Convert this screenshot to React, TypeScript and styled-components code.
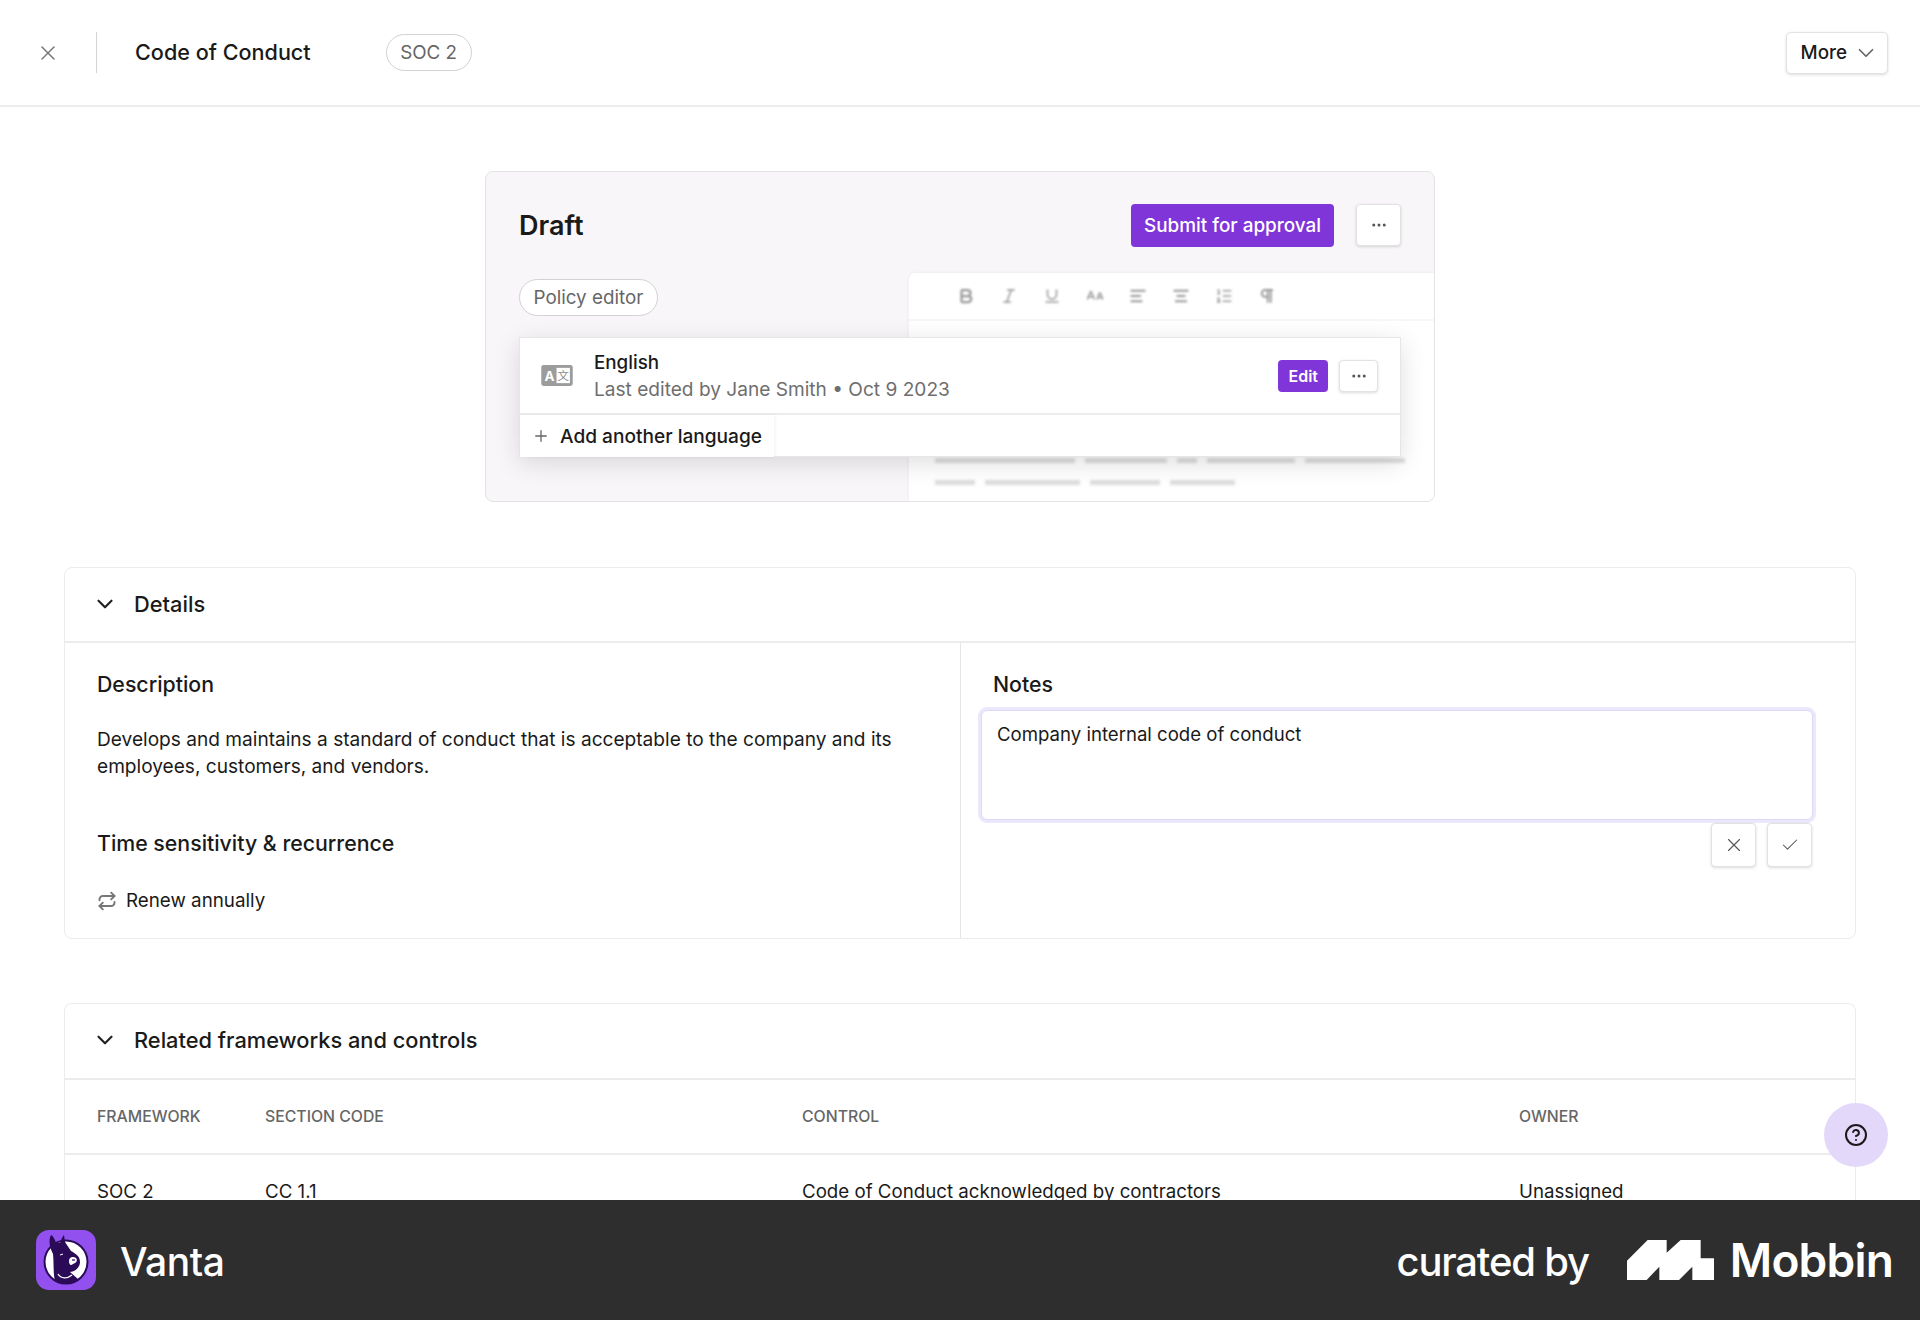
import React from "react";
import styled, { createGlobalStyle } from "styled-components";
import {
  X,
  Check,
  ChevronDown,
  Plus,
  Ellipsis,
  Repeat,
  CircleHelp,
  Bold,
  Italic,
  Underline,
  ALargeSmall,
  AlignLeft,
  AlignCenter,
  ListOrdered,
  Pilcrow,
} from "lucide-react";

const GlobalStyle = createGlobalStyle`
  html, body { margin: 0; padding: 0; background: #fff; }
  body { font-family: Inter, "Liberation Sans", sans-serif; color: #1a1a1a; -webkit-font-smoothing: antialiased; }
  * { box-sizing: border-box; }
`;

const Page = styled.div`
  position: relative;
  width: 1920px;
  height: 1320px;
  display: flex;
  flex-direction: column;
  overflow: hidden;
`;

const TopBar = styled.header`
  flex: none;
  height: 107px;
  display: flex;
  align-items: center;
  padding: 0 32px 0 36px;
  border-bottom: 2px solid #ececec;
`;

const IconOnly = styled.span`
  display: flex;
  color: #777;
`;

const Divider = styled.span`
  width: 1px;
  height: 41px;
  margin: 0 38px 0 36px;
  background: #d4d4d4;
`;

const Title = styled.h1`
  margin: 0 75px 1px 0;
  font-size: 21.6px;
  font-weight: 500;
  line-height: 28px;
`;

const Pill = styled.span`
  display: inline-flex;
  align-items: center;
  height: 37px;
  padding: 0 13.5px;
  border: 1.5px solid #d2d2d2;
  border-radius: 19px;
  background: #fff;
  color: #666;
  font-size: 18.8px;
  white-space: nowrap;
`;

const Spacer = styled.div`
  flex: 1;
`;

const MoreButton = styled.button`
  display: flex;
  align-items: center;
  gap: 6px;
  height: 42px;
  padding: 0 8px 0 14px;
  border: 1px solid #e2e2e2;
  border-radius: 5px;
  background: #fff;
  box-shadow: 0 1px 3px rgba(0, 0, 0, 0.14);
  color: #1a1a1a;
  font: 500 18.8px Inter, sans-serif;
  svg { color: #666; }
`;

const Content = styled.main`
  flex: 1;
  min-height: 0;
  overflow: hidden;
  padding: 64px 64px 0;
  display: flex;
  flex-direction: column;
  gap: 65px;
`;

const DraftCard = styled.section`
  position: relative;
  align-self: center;
  flex: none;
  width: 950px;
  height: 331px;
  padding: 32px 33px 0;
  border: 1px solid #e4e3e4;
  border-radius: 8px;
  background: #f8f6f8;
  overflow: hidden;
`;

const DraftHead = styled.div`
  display: flex;
  align-items: center;
  height: 42px;
`;

const DraftTitle = styled.h2`
  flex: 1;
  margin: 0;
  font-size: 27px;
  font-weight: 600;
`;

const PrimaryButton = styled.button<{ $small?: boolean }>`
  height: ${(p) => (p.$small ? "32px" : "43px")};
  padding: 0 ${(p) => (p.$small ? "10px" : "13px")};
  border: 0;
  border-radius: 4px;
  background: #8035d9;
  color: #fff;
  font: ${(p) => (p.$small ? "600 16px" : "500 18.9px")} Inter, sans-serif;
  white-space: nowrap;
`;

const SquareButton = styled.button<{ $w: number; $h: number; $ml?: number }>`
  display: flex;
  align-items: center;
  justify-content: center;
  flex: none;
  width: ${(p) => p.$w}px;
  height: ${(p) => p.$h}px;
  margin-left: ${(p) => p.$ml ?? 0}px;
  padding: 0;
  border: 1px solid #e2e2e2;
  border-radius: 4px;
  background: #fff;
  box-shadow: 0 1px 3px rgba(0, 0, 0, 0.14);
  color: #555;
`;

const PolicyRow = styled.div`
  position: relative;
  z-index: 1;
  margin-top: 33px;
  display: flex;
`;

const EditorPreview = styled.div`
  position: absolute;
  left: 423px;
  right: 0;
  top: 101px;
  bottom: 0;
  background: #fff;
  border-top-left-radius: 6px;
  box-shadow: 0 0 4px rgba(0, 0, 0, 0.05);
`;

const EditorTools = styled.div`
  height: 48px;
  display: flex;
  align-items: center;
  gap: 25px;
  padding-left: 48px;
  border-bottom: 2px solid #f7f7f7;
  color: #999;
  svg { filter: blur(1px); }
`;

const EditorLine = styled.div<{ $top: number }>`
  position: absolute;
  left: 26px;
  top: ${(p) => p.$top}px;
  display: flex;
  gap: 10px;
  filter: blur(1.5px);
`;

const EditorWord = styled.span<{ $w: number }>`
  display: block;
  width: ${(p) => p.$w}px;
  height: 5px;
  background: #dcdcdc;
`;

const LanguageCard = styled.div`
  position: relative;
  z-index: 2;
  margin-top: 21px;
  height: 120px;
  border: 1px solid #e6e6e6;
  background: #fff;
  box-shadow: 0 6px 24px rgba(0, 0, 0, 0.13);
`;

const LanguageRow = styled.div`
  display: flex;
  align-items: center;
  height: 77px;
  padding: 0 22px 0 21px;
  border-bottom: 2px solid #ececec;
`;

const LanguageText = styled.div`
  flex: 1;
  margin-left: 21px;
`;

const LanguageName = styled.div`
  font-size: 18.8px;
  font-weight: 500;
  line-height: 27px;
`;

const LanguageMeta = styled.div`
  font-size: 19.1px;
  line-height: 27px;
  color: #6e6e6e;
`;

const AddRow = styled.div`
  display: inline-flex;
  align-items: center;
  gap: 10px;
  height: 42px;
  padding: 0 12px 0 12px;
  background: #fff;
  box-shadow: 1px 0 3px rgba(0, 0, 0, 0.06);
  font-size: 19.1px;
  font-weight: 500;
  svg { color: #666; }
`;

const Panel = styled.section<{ $open?: boolean }>`
  flex: none;
  border: 1px solid #ececec;
  border-radius: 8px;
  ${(p) => (p.$open ? "margin-top: -1px; border-bottom: 0; border-radius: 8px 8px 0 0;" : "")}
`;

const PanelHead = styled.div<{ $tall?: boolean }>`
  display: flex;
  align-items: center;
  gap: 16px;
  height: ${(p) => (p.$tall ? "76px" : "75px")};
  padding: 0 0 ${(p) => (p.$tall ? "3px" : "2px")} 27px;
  border-bottom: 2px solid #ececec;
  font-size: 21.8px;
  font-weight: 500;
  svg { color: #222; }
`;

const Columns = styled.div`
  display: grid;
  grid-template-columns: 896px 1fr;
  height: 295px;
`;

const LeftCol = styled.div`
  padding: 27px 32px 0;
  border-right: 1px solid #e6e6e6;
`;

const RightCol = styled.div`
  padding: 27px 32px 0 32px;
`;

const SubHead = styled.h3<{ $mt?: number }>`
  margin: ${(p) => p.$mt ?? 0}px 0 0;
  font-size: 21.3px;
  font-weight: 500;
  line-height: 28px;
`;

const Body = styled.p`
  margin: 28px 0 0;
  font-size: 19.1px;
  line-height: 27px;
`;

const RenewRow = styled.div`
  display: flex;
  align-items: center;
  gap: 9px;
  margin-top: 30px;
  font-size: 18.8px;
  line-height: 27px;
  svg { color: #777; }
`;

const NotesBox = styled.div`
  margin: 12px 0 0 -12px;
  width: 832px;
  height: 110px;
  padding: 10px 15px;
  border: 1px solid #dcd8f6;
  border-radius: 6px;
  background: #fff;
  box-shadow: 0 0 0 3px #ebe8fc;
  font-size: 18.6px;
  line-height: 27px;
`;

const NotesActions = styled.div`
  display: flex;
  justify-content: flex-end;
  gap: 11px;
  width: 831px;
  margin: 3px 0 0 -12px;
`;

const TableHead = styled.div`
  display: grid;
  grid-template-columns: 168px 537px 717px 1fr;
  align-items: center;
  height: 75px;
  padding-left: 32px;
  border-bottom: 2px solid #ececec;
  color: #666;
  font-size: 15.8px;
  font-weight: 500;
  text-transform: uppercase;
`;

const TableRow = styled.div`
  display: grid;
  grid-template-columns: 168px 537px 717px 1fr;
  align-items: center;
  height: 72px;
  padding-left: 32px;
  font-size: 18.7px;
`;

const HelpButton = styled.button`
  position: absolute;
  left: 1824px;
  top: 1103px;
  display: flex;
  align-items: center;
  justify-content: center;
  width: 64px;
  height: 64px;
  padding: 0;
  border: 0;
  border-radius: 50%;
  background: #e3d8f9;
  color: #1a1a1a;
`;

const Footer = styled.footer`
  position: relative;
  z-index: 3;
  flex: none;
  height: 120px;
  display: flex;
  align-items: center;
  padding: 0 27px 0 36px;
  background: #2e2e2e;
  color: #fff;
`;

const AppName = styled.span`
  margin: 2px 0 0 24px;
  font-size: 39px;
  font-weight: 500;
  letter-spacing: -0.5px;
`;

const Curated = styled.span`
  margin: 2px 38px 0 0;
  font-size: 40px;
  font-weight: 500;
  letter-spacing: -1.2px;
`;

const Brand = styled.span`
  margin-left: 16px;
  font-size: 46px;
  font-weight: 600;
  letter-spacing: -0.8px;
`;

const LanguageIcon = () => (
  <svg width="32" height="21" viewBox="0 0 33 22">
    <rect width="33" height="22" rx="2.5" fill="#9c9c9c" />
    <rect x="16" y="3" width="14" height="16" fill="#fff" />
    <text x="3.5" y="16.5" fontSize="14" fontWeight="700" fill="#fff" fontFamily="Inter, sans-serif">
      A
    </text>
    <text x="17" y="15.5" fontSize="12" fill="#8a8a8a" fontFamily="'Noto Sans CJK SC', sans-serif">
      文
    </text>
  </svg>
);

const VantaLogo = () => (
  <svg width="60" height="60" viewBox="0 0 60 60">
    <rect width="60" height="60" rx="13" fill="#9250ee" />
    <circle cx="30" cy="32" r="21.5" fill="#fff" stroke="#2b0b57" strokeWidth="2" />
    <path
      d="M15 5C12 11 14 18 17 24C18 33 17 43 19 51C25 55 36 55 42 49L34 42C38 42 44 38 44 32C44 26 40 24 35 21C33 18 31 15 29 12L28 5C26 7 25 10 24 13L20 13C19 9 17 6 15 5Z"
      fill="#2b0b57"
    />
    <path d="M22 44C25 49 31 49 36 45" fill="none" stroke="#fff" strokeWidth="1.4" />
    <path d="M33 31C33 27 37 26 40 28C42 31 40 33 37 34C35 36 33 35 33 31Z" fill="#fff" />
    <path d="M36 30L39 30" stroke="#2b0b57" strokeWidth="1.2" />
    <path d="M24 25L27 24" stroke="#fff" strokeWidth="1" />
  </svg>
);

const MobbinMark = () => (
  <svg width="87" height="40" viewBox="36 30 261 120">
    <path
      d="M36 92L98 30H155V68L197 30H257V85H297V150H232V110L192 150H133V110L95 150H36Z"
      fill="#fff"
    />
  </svg>
);

const firstLine = [140, 82, 20, 88, 100];
const secondLine = [40, 95, 70, 65];

export default function App() {
  return (
    <Page>
      <GlobalStyle />
      <TopBar>
        <IconOnly>
          <X size={24} strokeWidth={1.5} />
        </IconOnly>
        <Divider />
        <Title>Code of Conduct</Title>
        <Pill>SOC 2</Pill>
        <Spacer />
        <MoreButton>
          More
          <ChevronDown size={26} strokeWidth={1.6} />
        </MoreButton>
      </TopBar>
      <Content>
        <DraftCard>
          <EditorPreview>
            <EditorTools>
              <Bold size={18} strokeWidth={3} />
              <Italic size={18} />
              <Underline size={18} />
              <ALargeSmall size={18} />
              <AlignLeft size={18} strokeWidth={2.5} />
              <AlignCenter size={18} strokeWidth={2.5} />
              <ListOrdered size={18} />
              <Pilcrow size={18} strokeWidth={2.5} />
            </EditorTools>
            <EditorLine $top={185}>
              {firstLine.map((w, i) => (
                <EditorWord key={i} $w={w} />
              ))}
            </EditorLine>
            <EditorLine $top={207}>
              {secondLine.map((w, i) => (
                <EditorWord key={i} $w={w} />
              ))}
            </EditorLine>
          </EditorPreview>
          <DraftHead>
            <DraftTitle>Draft</DraftTitle>
            <PrimaryButton>Submit for approval</PrimaryButton>
            <SquareButton $w={45} $h={42} $ml={22}>
              <Ellipsis size={18} />
            </SquareButton>
          </DraftHead>
          <PolicyRow>
            <Pill>Policy editor</Pill>
          </PolicyRow>
          <LanguageCard>
            <LanguageRow>
              <LanguageIcon />
              <LanguageText>
                <LanguageName>English</LanguageName>
                <LanguageMeta>Last edited by Jane Smith • Oct 9 2023</LanguageMeta>
              </LanguageText>
              <PrimaryButton $small>Edit</PrimaryButton>
              <SquareButton $w={39} $h={32} $ml={11}>
                <Ellipsis size={18} />
              </SquareButton>
            </LanguageRow>
            <AddRow>
              <Plus size={18} strokeWidth={1.75} />
              Add another language
            </AddRow>
          </LanguageCard>
        </DraftCard>

        <Panel>
          <PanelHead>
            <ChevronDown size={26} strokeWidth={2} />
            Details
          </PanelHead>
          <Columns>
            <LeftCol>
              <SubHead>Description</SubHead>
              <Body>
                Develops and maintains a standard of conduct that is acceptable to the company and its
                employees, customers, and vendors.
              </Body>
              <SubHead $mt={49}>Time sensitivity &amp; recurrence</SubHead>
              <RenewRow>
                <Repeat size={20} strokeWidth={2.3} />
                Renew annually
              </RenewRow>
            </LeftCol>
            <RightCol>
              <SubHead>Notes</SubHead>
              <NotesBox>Company internal code of conduct</NotesBox>
              <NotesActions>
                <SquareButton $w={45} $h={44}>
                  <X size={22} strokeWidth={1.25} />
                </SquareButton>
                <SquareButton $w={45} $h={44}>
                  <Check size={20} strokeWidth={1.25} />
                </SquareButton>
              </NotesActions>
            </RightCol>
          </Columns>
        </Panel>

        <Panel $open>
          <PanelHead $tall>
            <ChevronDown size={26} strokeWidth={2} />
            Related frameworks and controls
          </PanelHead>
          <TableHead>
            <span>Framework</span>
            <span>Section code</span>
            <span>Control</span>
            <span>Owner</span>
          </TableHead>
          <TableRow>
            <span>SOC 2</span>
            <span>CC 1.1</span>
            <span>Code of Conduct acknowledged by contractors</span>
            <span>Unassigned</span>
          </TableRow>
        </Panel>
      </Content>
      <HelpButton aria-label="Help">
        <CircleHelp size={24} strokeWidth={2} />
      </HelpButton>
      <Footer>
        <VantaLogo />
        <AppName>Vanta</AppName>
        <Spacer />
        <Curated>curated by</Curated>
        <MobbinMark />
        <Brand>Mobbin</Brand>
      </Footer>
    </Page>
  );
}
